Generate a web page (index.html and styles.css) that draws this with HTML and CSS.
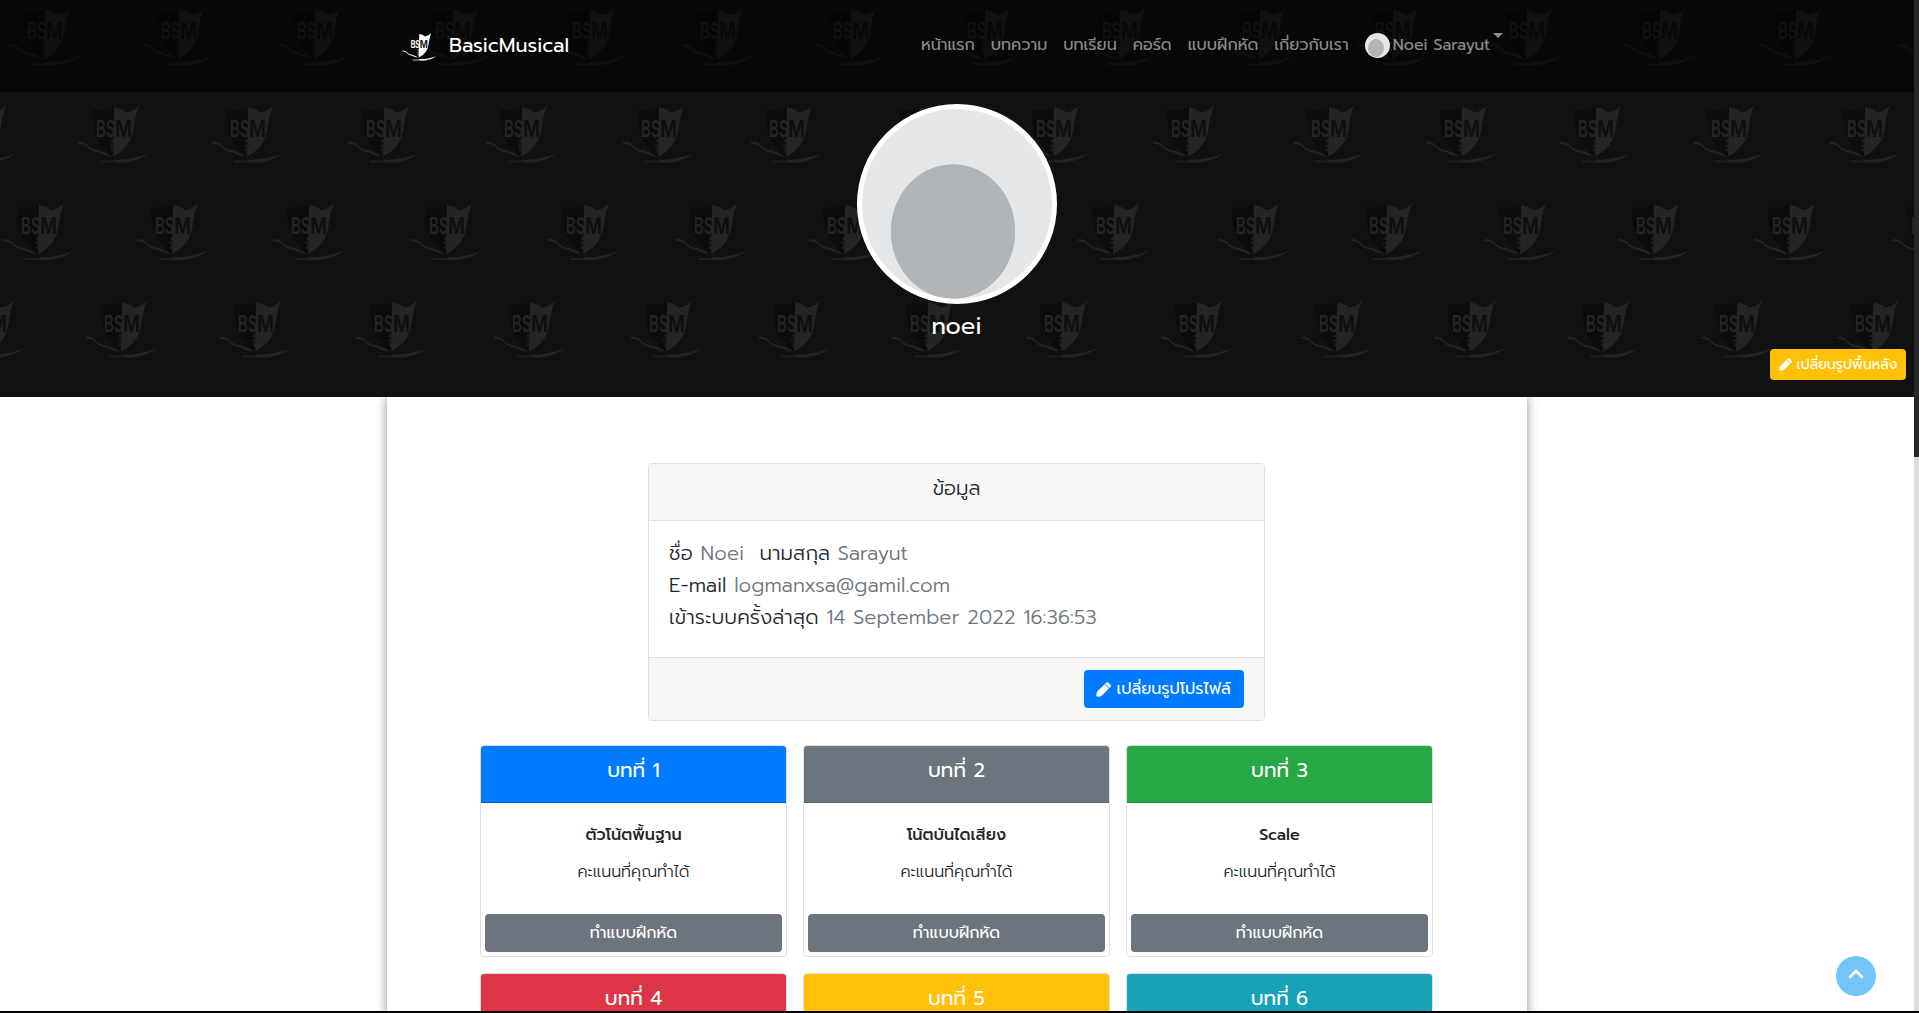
FILE: index.html
```html
<!DOCTYPE html>
<html lang="th">
<head>
<meta charset="utf-8">
<title>BasicMusical</title>
<link rel="stylesheet" href="styles.css">
</head>
<body>
<svg class="defs" width="0" height="0" aria-hidden="true">
  <symbol id="pencil" viewBox="0 0 14 14"><path fill="currentColor" d="M.9 9.200 8 2.100l4 4-7.100 7.100-3.200.6q-1.400 0-1.400-1.400zM8.500 1.600 9.500.6q1-.9 2 0l2 2q.9 1 0 2l-1 1z"/></symbol>
  <g id="crest">
    <path class="crest-shade" d="M14 4q12 2 22-2v49Q14 40 14 4z"/>
    <path d="M36 2q8 1 12 5 8-1 13-7-4 11-5 20-2 22-21 31z"/>
    <text class="crest-word" x="18" y="31" textLength="19" lengthAdjust="spacingAndGlyphs">BS</text>
    <text class="crest-word crest-m" x="37" y="31" textLength="17" lengthAdjust="spacingAndGlyphs">M</text>
    <path d="M0 36q5 0 8 2 6 7 13 7 7 2 13 6-8-1-13-4-7 0-13-7-5-2-8-2zM36 54q15 1 35-6-12 8-22 8-5 2-13 0z"/>
    <path d="M22 55h30v2H22zM33 34h3v3h-3zM32 39h4v2h-4zM33 43h3v3h-3z" opacity=".7"/>
  </g>
  <g id="crests">
    <use href="#crest" x="-55"/><use href="#crest" x="78"/><use href="#crest" x="212"/><use href="#crest" x="348"/><use href="#crest" x="486"/><use href="#crest" x="623"/><use href="#crest" x="751"/><use href="#crest" x="884"/><use href="#crest" x="1018"/><use href="#crest" x="1153"/><use href="#crest" x="1293"/><use href="#crest" x="1426"/><use href="#crest" x="1560"/><use href="#crest" x="1693"/><use href="#crest" x="1829"/><use href="#crest" x="1968"/>
  </g>
</svg>
<div class="page">
  <header class="hero">
    <svg class="pattern" width="1914" height="397" aria-hidden="true">
      <use href="#crests" x="-69" y="8"/><use href="#crests" y="105.500"/><use href="#crests" x="-75" y="203"/><use href="#crests" x="8" y="300.500"/>
    </svg>
    <nav class="navbar">
      <a class="brand"><svg class="logo" width="35" height="31" viewBox="0 0 73 60"><use href="#crest"/></svg><span class="brand-name">BasicMusical</span></a>
      <div class="links">
        <a>หน้าแรก</a><a>บทความ</a><a>บทเรียน</a><a>คอร์ด</a><a>แบบฝึกหัด</a><a>เกี่ยวกับเรา</a>
        <a class="user"><span class="mini"></span><span>Noei Sarayut</span><span class="caret"></span></a>
      </div>
    </nav>
    <div class="profile">
      <div class="avatar"></div>
      <h1>noei</h1>
    </div>
    <button class="btn btn-cover"><svg width="13" height="13"><use href="#pencil"/></svg><span>เปลี่ยนรูปพื้นหลัง</span></button>
  </header>
  <main class="sheet">
    <section class="card info">
      <div class="card-head">ข้อมูล</div>
      <div class="info-body">
        <p>ชื่อ <i>Noei</i> &nbsp;นามสกุล <i>Sarayut</i></p>
        <p>E-mail <i>logmanxsa@gamil.com</i></p>
        <p>เข้าระบบครั้งล่าสุด <i>14 September 2022 16:36:53</i></p>
      </div>
      <div class="info-foot"><button class="btn btn-photo"><svg width="15" height="15"><use href="#pencil"/></svg><span>เปลี่ยนรูปโปรไฟล์</span></button></div>
    </section>
    <section class="lessons">
      <article class="card"><h2 class="blue">บทที่ 1</h2><div class="body"><b>ตัวโน้ตพื้นฐาน</b><p>คะแนนที่คุณทำได้</p></div><button class="btn">ทำแบบฝึกหัด</button></article>
      <article class="card"><h2 class="gray">บทที่ 2</h2><div class="body"><b>โน้ตบันไดเสียง</b><p>คะแนนที่คุณทำได้</p></div><button class="btn">ทำแบบฝึกหัด</button></article>
      <article class="card"><h2 class="green">บทที่ 3</h2><div class="body"><b>Scale</b><p>คะแนนที่คุณทำได้</p></div><button class="btn">ทำแบบฝึกหัด</button></article>
      <article class="card"><h2 class="red">บทที่ 4</h2></article>
      <article class="card"><h2 class="yellow">บทที่ 5</h2></article>
      <article class="card"><h2 class="teal">บทที่ 6</h2></article>
    </section>
  </main>
</div>
<div class="scrollbar"><div class="thumb"></div></div>
<a class="to-top"><svg width="16" height="10" viewBox="0 0 16 10"><path d="M2 8l6-6 6 6" fill="none" stroke="#fff" stroke-width="2.600" stroke-linecap="round"/></svg></a>
</body>
</html>
```
FILE: styles.css
```css
* { box-sizing: border-box; }
body { margin: 0; height: 1013px; overflow: hidden; display: grid; grid-template-columns: 1914px 5px; grid-template-rows: 1011px; background: #000; color: #212529; font: 300 16px/24px Prompt, "Noto Sans Thai", Inter, sans-serif; }
p, h1, h2 { margin: 0; font-weight: 300; }
i { font-style: normal; }
.defs { position: absolute; }
.page { background: #fff; overflow: hidden; }
.hero { position: relative; z-index: 1; height: 397px; background: #111; color: #fff; overflow: hidden; }
.pattern { position: absolute; inset: 0; fill: #252525; }
.crest-shade { fill: #0c0c0c; }
.crest-word { font: bold 23px "Liberation Sans", sans-serif; }
.crest-m { fill: #101010; }
.navbar { position: relative; height: 92px; padding: 0 411px 2px 402px; display: flex; align-items: center; justify-content: space-between; background: rgba(0, 0, 0, .55); }
.brand { display: flex; gap: 12px; align-items: center; font-size: 20px; font-weight: 400; }
.logo { fill: #fff; position: relative; top: 2px; }
.links { display: flex; gap: 16px; color: rgba(255, 255, 255, .55); font-weight: 400; white-space: nowrap; }
.user { display: flex; align-items: center; gap: 3px; }
.mini { width: 25px; height: 25px; border-radius: 50%; background: radial-gradient(8px 9px at 11px 15px, #aeb4b8 97%, #e4e6e8); }
.caret { margin-top: -20px; border: 5px solid transparent; border-top-color: currentColor; border-bottom: 0; }
.profile { position: relative; display: flex; flex-direction: column; align-items: center; padding-top: 12px; }
.avatar { width: 200px; height: 200px; border: 5px solid #fff; border-radius: 50%; background: radial-gradient(62.500px 67.500px at 91px 122.500px, #aeb4b8 99%, #e4e6e8); }
.profile h1 { font-size: 24px; line-height: 29px; margin: 8px 1px 0 0; font-weight: 400; }
.btn { display: flex; align-items: center; justify-content: center; gap: 5px; border: 0; border-radius: 4px; padding: 0; color: #fff; background: #6c757d; font: 400 16px/24px Prompt, "Noto Sans Thai", Inter, sans-serif; white-space: nowrap; }
.btn-cover { position: absolute; right: 8px; bottom: 17px; width: 136px; height: 31px; background: #ffc107; font-size: 14px; }
.sheet { width: 1140px; margin: 0 auto; height: 620px; padding: 66px 1px 0 0; box-shadow: 0 0 10px rgba(0, 0, 0, .45); }
.card { border: 1px solid #dfdfdf; border-radius: 4px; overflow: hidden; background: #fff; }
.info { width: 617px; height: 258px; margin: 0 auto; display: flex; flex-direction: column; }
.card-head { height: 57px; padding-top: 12px; text-align: center; font-size: 20px; background: #f7f7f7; border-bottom: 1px solid #dfdfdf; }
.info-body { height: 137px; padding: 16px 20px; font-size: 20px; line-height: 32px; letter-spacing: .1px; white-space: nowrap; }
.info-body i { color: #6c757d; }
.info-foot { flex: 1; background: #f7f7f7; border-top: 1px solid #dfdfdf; padding: 12px 20px; display: flex; justify-content: flex-end; }
.btn-photo { width: 160px; height: 38px; padding-right: 1px; background: #007bff; }
.lessons { width: 953px; margin: 24px auto 0; display: grid; grid-template-columns: repeat(3, 307px); column-gap: 16px; row-gap: 16px; grid-auto-rows: 212px; }
.lessons .card { display: flex; flex-direction: column; }
.lessons h2 { height: 57px; padding-top: 12px; font-size: 20px; font-weight: 400; text-align: center; color: #fff; border-bottom: 1px solid rgba(0, 0, 0, .2); }
.body { flex: 1; padding-top: 20px; text-align: center; }
.body b { font-weight: 500; }
.body p { margin-top: 13px; }
.lessons .btn { height: 38px; margin: 4px; }
.blue { background: #007bff; } .gray { background: #6c757d; } .green { background: #28a745; }
.red { background: #dc3545; } .yellow { background: #ffc107; } .teal { background: #17a2b8; }
.scrollbar { background: #dbdbdb; }
.thumb { height: 457px; background: #272727; }
.to-top { position: fixed; left: 1836px; top: 956px; width: 40px; height: 40px; border-radius: 50%; background: #75c5fc; display: grid; place-items: center; padding-bottom: 4px; }
```
